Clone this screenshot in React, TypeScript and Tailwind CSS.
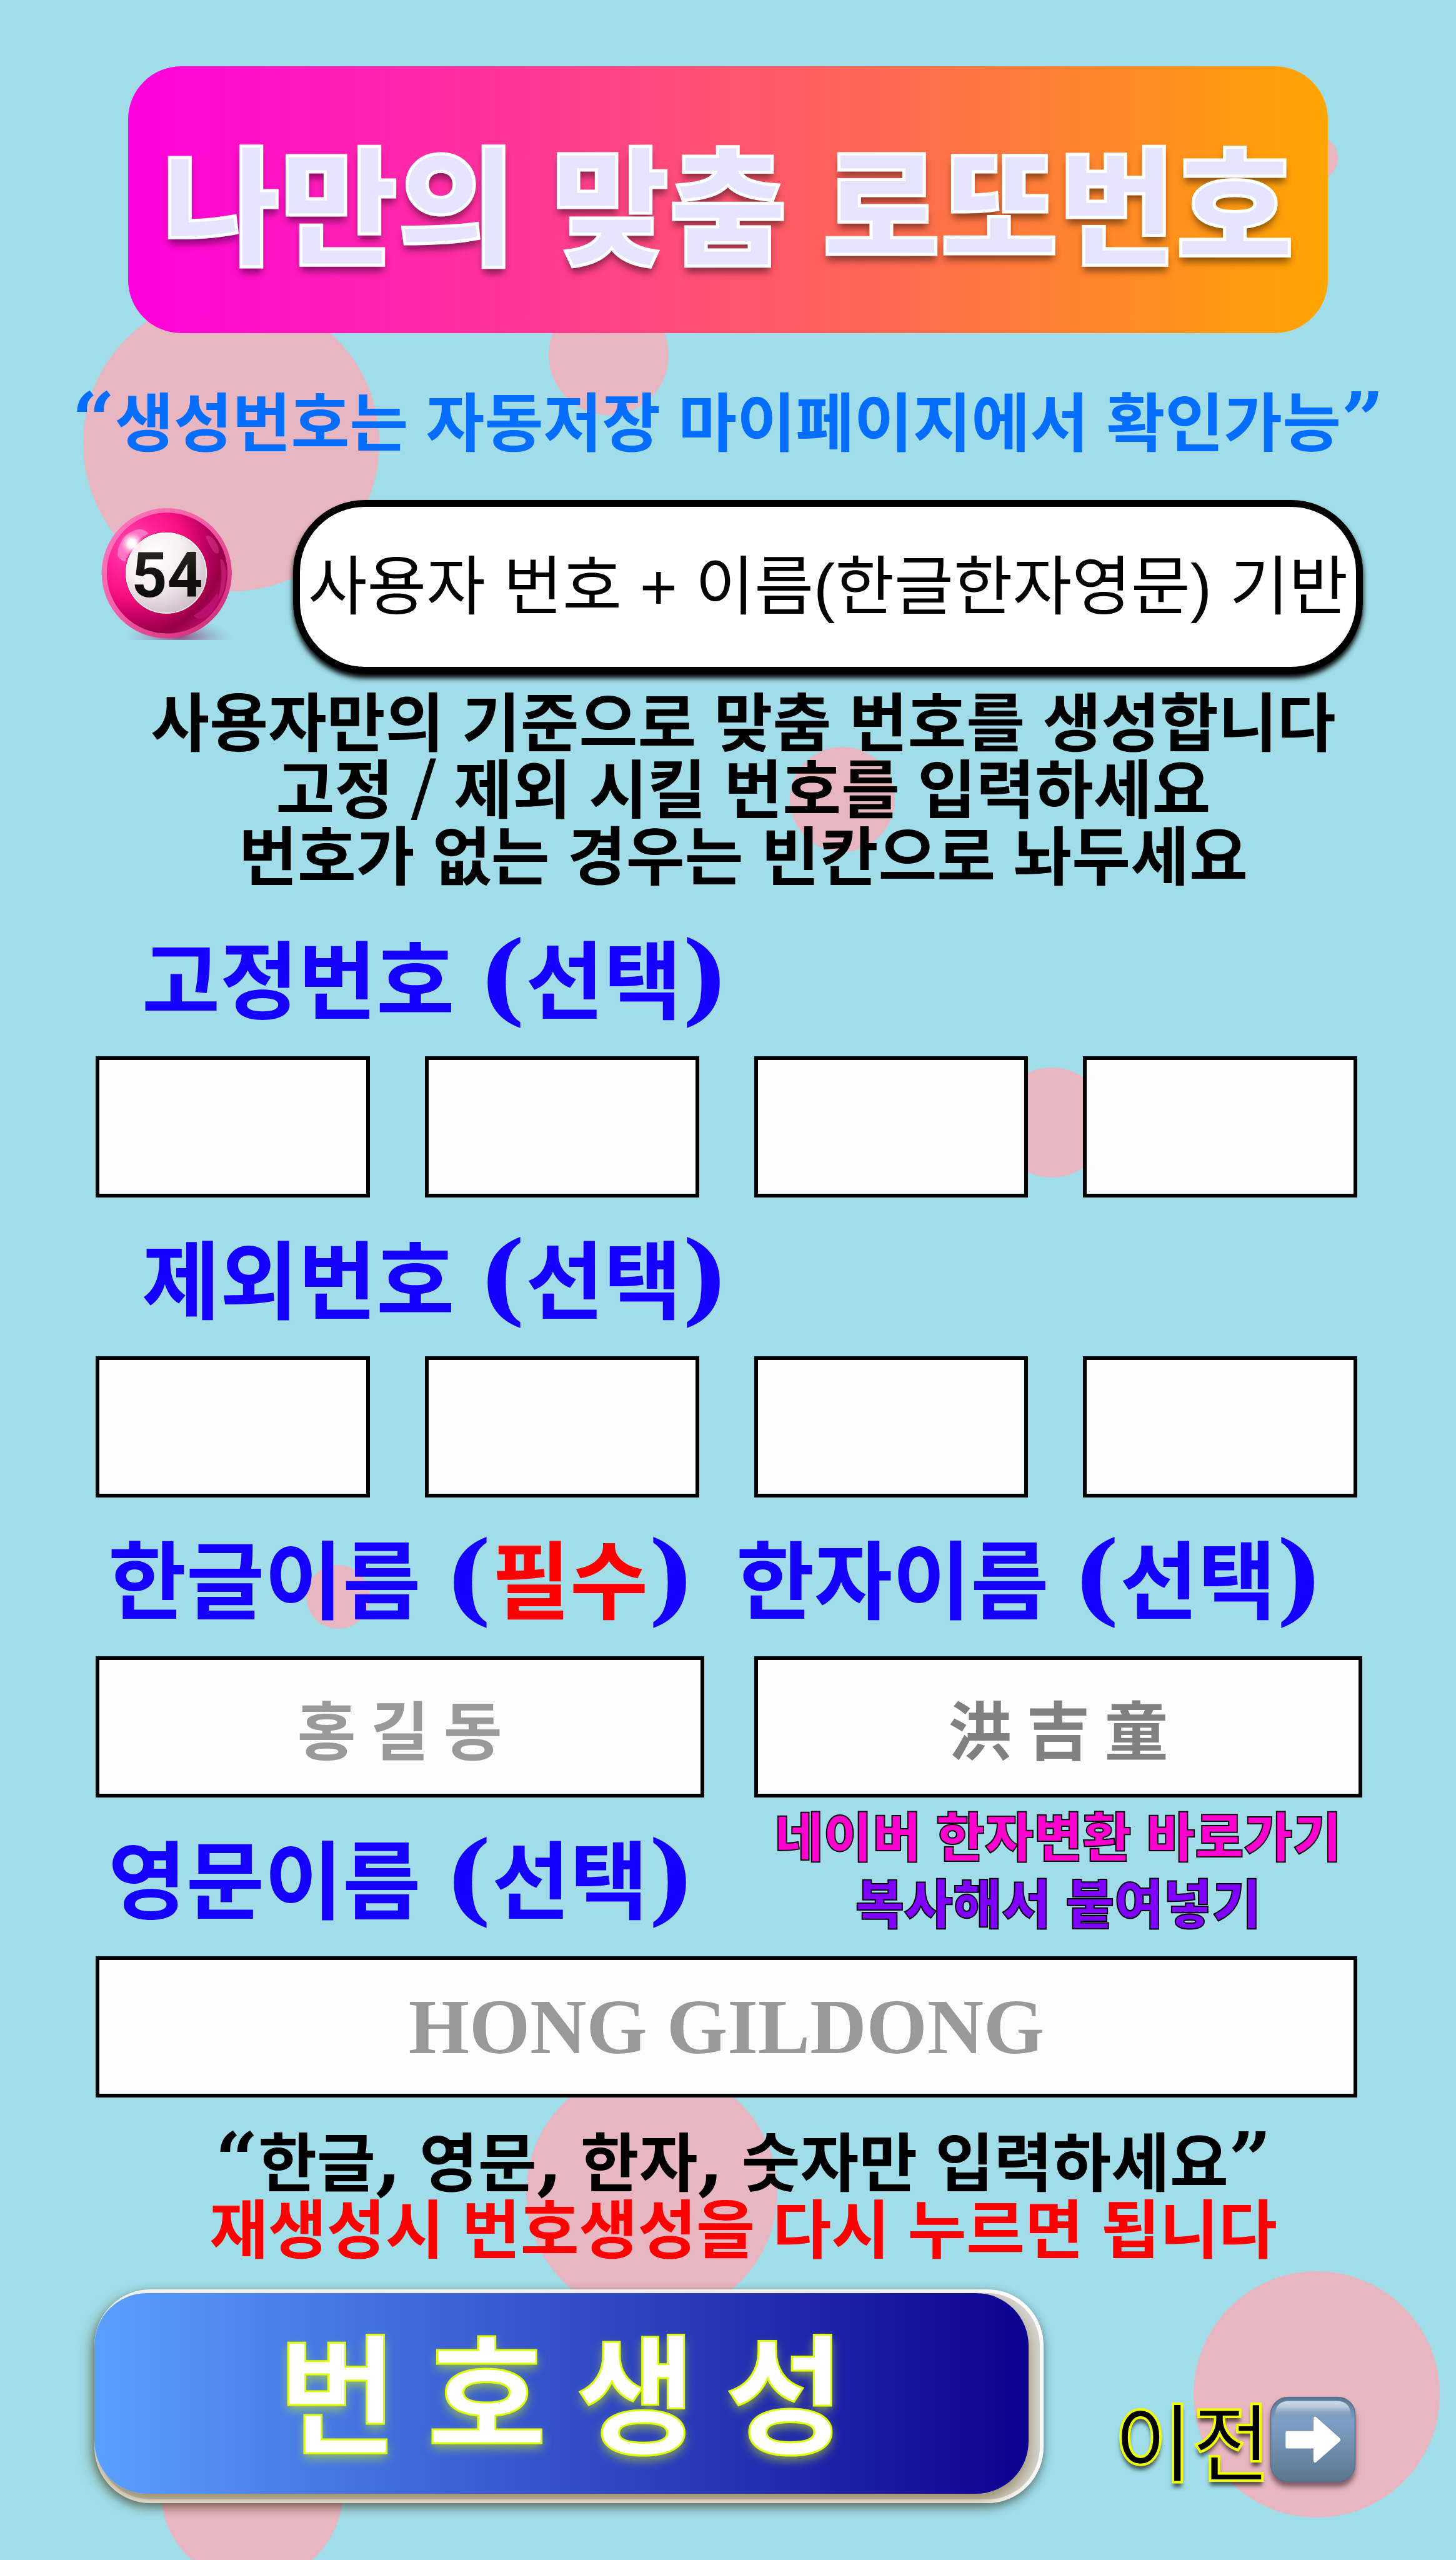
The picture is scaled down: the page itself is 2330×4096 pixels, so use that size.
import type { ReactNode } from "react";

function Dots() {
  const dot = "absolute rounded-full bg-[#e8b6c0]";
  return (
    <div aria-hidden="true" className="absolute inset-0 overflow-hidden pointer-events-none">
      <i className={`${dot} left-[133px] top-[472px] size-[474px]`} />
      <i className={`${dot} left-[878px] top-[472px] size-[192px]`} />
      <i className={`${dot} left-[2069px] top-[217px] size-[72px]`} />
      <i className={`${dot} left-[1264px] top-[1195px] size-[168px]`} />
      <i className={`${dot} left-[1595px] top-[1708px] size-[176px]`} />
      <i className={`${dot} left-[490px] top-[2504px] size-[102px]`} />
      <i className={`${dot} left-[842px] top-[3307px] size-[402px]`} />
      <i className={`${dot} left-[1910px] top-[3634px] size-[394px]`} />
      <i className={`${dot} left-[257px] top-[3840px] size-[292px]`} />
    </div>
  );
}

function LottoBall() {
  return (
    <svg viewBox="130 125 1190 1195" className="mt-3 size-[212px] shrink-0" role="img" aria-label="54">
      <defs>
        <linearGradient id="rim" x1="0" y1="0" x2="1" y2="1">
          <stop offset="0" stopColor="#ff7cc2" />
          <stop offset="0.45" stopColor="#f25fa6" />
          <stop offset="1" stopColor="#c8246f" />
        </linearGradient>
        <radialGradient id="body" gradientUnits="userSpaceOnUse" cx="420" cy="480" r="900">
          <stop offset="0" stopColor="#ff4fb4" />
          <stop offset="0.28" stopColor="#ff2098" />
          <stop offset="0.5" stopColor="#f80f82" />
          <stop offset="0.72" stopColor="#c00063" />
          <stop offset="0.9" stopColor="#960045" />
          <stop offset="1" stopColor="#b00a60" />
        </radialGradient>
        <radialGradient id="face" gradientUnits="userSpaceOnUse" cx="600" cy="560" r="560">
          <stop offset="0" stopColor="#ffffff" />
          <stop offset="0.5" stopColor="#f7eef0" />
          <stop offset="1" stopColor="#cdbcc6" />
        </radialGradient>
        <radialGradient id="glow">
          <stop offset="0" stopColor="#fff" />
          <stop offset="0.35" stopColor="#fff" stopOpacity="0.95" />
          <stop offset="1" stopColor="#ffb0e0" stopOpacity="0" />
        </radialGradient>
        <radialGradient id="ground">
          <stop offset="0" stopColor="#8a3f77" stopOpacity="0.9" />
          <stop offset="1" stopColor="#8a9fc0" stopOpacity="0" />
        </radialGradient>
        <linearGradient id="digit" x1="0" y1="0" x2="0" y2="1">
          <stop offset="0" stopColor="#33322c" />
          <stop offset="0.5" stopColor="#12110d" />
          <stop offset="1" stopColor="#0a0a08" />
        </linearGradient>
      </defs>
      <ellipse cx="830" cy="1290" rx="480" ry="150" fill="url(#ground)" />
      <circle cx="718" cy="718" r="587" fill="url(#rim)" />
      <circle cx="722" cy="716" r="545" fill="url(#body)" />
      <path d="M276 555C276 440 350 340 475 320C520 325 545 345 555 362C470 400 390 480 345 612C310 605 285 585 276 555Z" fill="#ff8fd0" opacity="0.7" />
      <path d="M1070 390C1080 365 1110 375 1150 420C1190 480 1200 530 1180 540C1150 545 1130 520 1070 390Z" fill="#e050a0" opacity="0.4" />
      <path d="M1200 600C1215 580 1240 600 1255 700C1250 850 1220 920 1180 960C1215 850 1215 700 1200 600Z" fill="#d0287f" opacity="0.6" />
      <path d="M960 1100C1040 1050 1120 980 1170 900C1200 920 1180 1010 1110 1080C1060 1130 990 1145 960 1100Z" fill="#c01272" opacity="0.8" />
      <circle cx="714" cy="716" r="370" fill="url(#face)" stroke="#d4002f" strokeWidth="5" />
      <circle cx="714" cy="716" r="362" fill="none" stroke="#fff" strokeWidth="8" opacity="0.8" />
      <circle cx="405" cy="450" r="105" fill="url(#glow)" />
      <text x="722" y="932" textAnchor="middle" className="font-['Liberation_Sans_Narrow','Roboto',sans-serif] text-[560px] font-bold" fill="url(#digit)">54</text>
    </svg>
  );
}

function ArrowKey() {
  return (
    <svg viewBox="0 0 256 256" className="size-[136px] overflow-visible drop-shadow-[0_8px_4px_rgba(40,20,30,0.55)]" aria-hidden="true">
      <defs>
        <linearGradient id="key" x1="0" y1="0" x2="0" y2="1">
          <stop offset="0" stopColor="#587590" />
          <stop offset="0.28" stopColor="#7e9fc6" />
          <stop offset="0.5" stopColor="#7494b5" />
          <stop offset="1" stopColor="#5c768e" />
        </linearGradient>
        <linearGradient id="shine" x1="0" y1="0" x2="0" y2="1">
          <stop offset="0" stopColor="#cddbe8" />
          <stop offset="0.3" stopColor="#b9cbdd" />
          <stop offset="1" stopColor="#7e9fc6" stopOpacity="0" />
        </linearGradient>
      </defs>
      <rect x="1" y="1" width="254" height="254" rx="52" fill="url(#key)" stroke="#56718b" strokeWidth="3" />
      <path d="M14 70V56Q14 12 58 12H198Q242 12 242 56V70Z" fill="url(#shine)" />
      <path d="M50 102H129V64Q131 56 138 60L210 124Q214 129 210 134L138 197Q131 201 129 193V156H50Q45 156 45 150V108Q45 102 50 102Z" fill="#fff" stroke="#56718b" strokeOpacity="0.5" strokeWidth="2" />
    </svg>
  );
}

function Paren({ children }: { children: ReactNode }) {
  return <span className="font-['DejaVu_Serif',serif] text-[160px] leading-[0]">{children}</span>;
}

function Mark({ children }: { children: ReactNode }) {
  return <span className="font-['DejaVu_Serif',serif] text-[120px] leading-[0]">{children}</span>;
}

function FieldLabel({ name, htmlFor, note = "선택", required = false }: { name: string; htmlFor: string; note?: string; required?: boolean }) {
  return (
    <label htmlFor={htmlFor} className="block whitespace-nowrap text-[136px] font-bold leading-[136px] text-[#1500ff]">
      {name} <Paren>(</Paren>
      <span className={required ? "text-[#ff0000]" : ""}>{note}</span>
      <Paren>)</Paren>
    </label>
  );
}

const boxClass = "block h-[226px] w-full min-w-0 border-[6px] border-black bg-[#fdfdfd] text-center outline-none";

function NumberGroup({ name, id }: { name: string; id: string }) {
  return (
    <section>
      <div className="pl-[74px]">
        <FieldLabel name={name} htmlFor={`${id}-1`} />
      </div>
      <div className="mt-[49px] grid grid-cols-4 gap-[88px]">
        {[1, 2, 3, 4].map((n) => (
          <input key={n} id={`${id}-${n}`} type="text" inputMode="numeric" aria-label={`${name} ${n}`} className={`${boxClass} text-[102px]`} />
        ))}
      </div>
    </section>
  );
}

export default function App() {
  return (
    <div className="relative min-h-screen bg-[#a0dde8] pb-[91px] pt-[106px] font-['Liberation_Sans','Noto_Sans_CJK_KR',sans-serif] text-black">
      <Dots />
      <div className="relative">
        <header className="mx-[205px] rounded-[85px] bg-linear-to-r/srgb from-[#ff00df] to-[#ffa600] pb-[95px] pt-[127px]">
          <h1 className="whitespace-nowrap text-center text-[205px] font-black leading-[205px] text-[#e5e5ff] [-webkit-text-stroke:5px_#fff] [text-shadow:0_10px_12px_rgba(0,0,0,0.45)]">
            나만의 맞춤 로또번호
          </h1>
        </header>

        <p className="mt-[93px] whitespace-nowrap text-center text-[102px] font-bold leading-[107px] text-[#056eff]">
          <Mark>“</Mark>생성번호는 자동저장 마이페이지에서 확인가능<Mark>”</Mark>
        </p>

        <div className="mt-[67px] flex pl-[162px] pr-[149px]">
          <LottoBall />
          <div className="ml-[95px] flex h-[278px] min-w-0 flex-1 items-center justify-center rounded-[115px] border-[11px] border-black bg-white shadow-[0_7px_8px_#000]">
            <p className="whitespace-nowrap text-[103px] leading-[107px]">사용자 번호 + 이름(한글한자영문) 기반</p>
          </div>
        </div>

        <main className="pl-[153px] pr-[158px]">
          <p className="mt-7 whitespace-nowrap pl-[54px] text-center text-[102px] font-bold leading-[107px]">
            사용자만의 기준으로 맞춤 번호를 생성합니다
            <br />
            고정 <span className="font-['DejaVu_Serif',serif] text-[120px] font-normal leading-[0]">/</span> 제외 시킬 번호를 입력하세요
            <br />
            번호가 없는 경우는 빈칸으로 놔두세요
          </p>

          <form className="mt-[78px]" onSubmit={(e) => e.preventDefault()}>
            <div className="flex flex-col gap-[69px]">
              <NumberGroup name="고정번호" id="fixed" />
              <NumberGroup name="제외번호" id="excluded" />

              <section className="-mr-2">
                <div className="flex gap-[65px] pl-5">
                  <FieldLabel name="한글이름" htmlFor="name-ko" note="필수" required />
                  <FieldLabel name="한자이름" htmlFor="name-hanja" />
                </div>
                <div className="mt-[49px] grid grid-cols-2 gap-20">
                  <input id="name-ko" type="text" placeholder="홍 길 동" className={`${boxClass} font-['Noto_Sans_CJK_KR',sans-serif] text-[102px] font-bold placeholder:text-[#999] placeholder:opacity-100`} />
                  <input id="name-hanja" type="text" placeholder="洪 吉 童" className={`${boxClass} font-['Noto_Sans_CJK_KR',sans-serif] text-[102px] font-bold placeholder:text-[#808080] placeholder:opacity-100`} />
                </div>
              </section>
            </div>

            <section className="mt-3">
              <div className="-mr-2 grid grid-cols-2 gap-20">
                <div className="pl-5 pt-[57px]">
                  <FieldLabel name="영문이름" htmlFor="name-en" />
                </div>
                <a href="#hanja" className="block whitespace-nowrap text-center text-[85px] font-black leading-[107px] text-[#ff00d0] [-webkit-text-stroke:2px_#000]">
                  네이버 한자변환 바로가기
                  <br />
                  <span className="text-[#8000ff]">복사해서 붙여넣기</span>
                </a>
              </div>
              <input id="name-en" type="text" placeholder="HONG GILDONG" className={`${boxClass} mt-7 font-['Liberation_Serif',serif] text-[125px] font-bold placeholder:text-[#999] placeholder:opacity-100`} />
            </section>

            <p className="mt-[54px] whitespace-nowrap pl-[54px] text-center text-[102px] font-bold leading-[107px]">
              <Mark>“</Mark>한글<Mark>,</Mark> 영문<Mark>,</Mark> 한자<Mark>,</Mark> 숫자만 입력하세요<Mark>”</Mark>
              <br />
              <span className="text-[#ff0000]">재생성시 번호생성을 다시 누르면 됩니다</span>
            </p>

            <div className="-mx-[2px] mt-[39px] flex items-end gap-[113px] pr-[5px]">
              <button type="submit" className="block h-[342px] min-w-0 flex-1 rounded-[90px] border-[6px] border-white bg-[#d6d6d4] shadow-[0_6px_16px_rgba(0,0,0,0.45)]">
                <span className="-ml-[6px] mr-[18px] mb-[9px] flex h-[321px] items-center justify-center rounded-[84px] bg-linear-to-r/srgb from-[#5aa0ff] to-[#0d0090] pb-5 shadow-[0_11px_26px_rgba(107,83,20,0.6)]">
                  <span className="whitespace-nowrap font-['Noto_Sans_CJK_KR',sans-serif] text-[208px] font-bold leading-[205px] text-white [-webkit-text-stroke:3px_#ddff00] [text-shadow:0_8px_16px_rgba(221,255,0,0.5)]">
                    번 호 생 성
                  </span>
                </span>
              </button>
              <a href="#prev" className="mb-6 flex shrink-0 items-center">
                <span className="pt-5 text-[136px] font-medium leading-[136px] [-webkit-text-stroke:4px_#f0ff00] [text-shadow:0_8px_6px_rgba(0,0,0,0.6)]">이전</span>
                <ArrowKey />
              </a>
            </div>
          </form>
        </main>
      </div>
    </div>
  );
}
